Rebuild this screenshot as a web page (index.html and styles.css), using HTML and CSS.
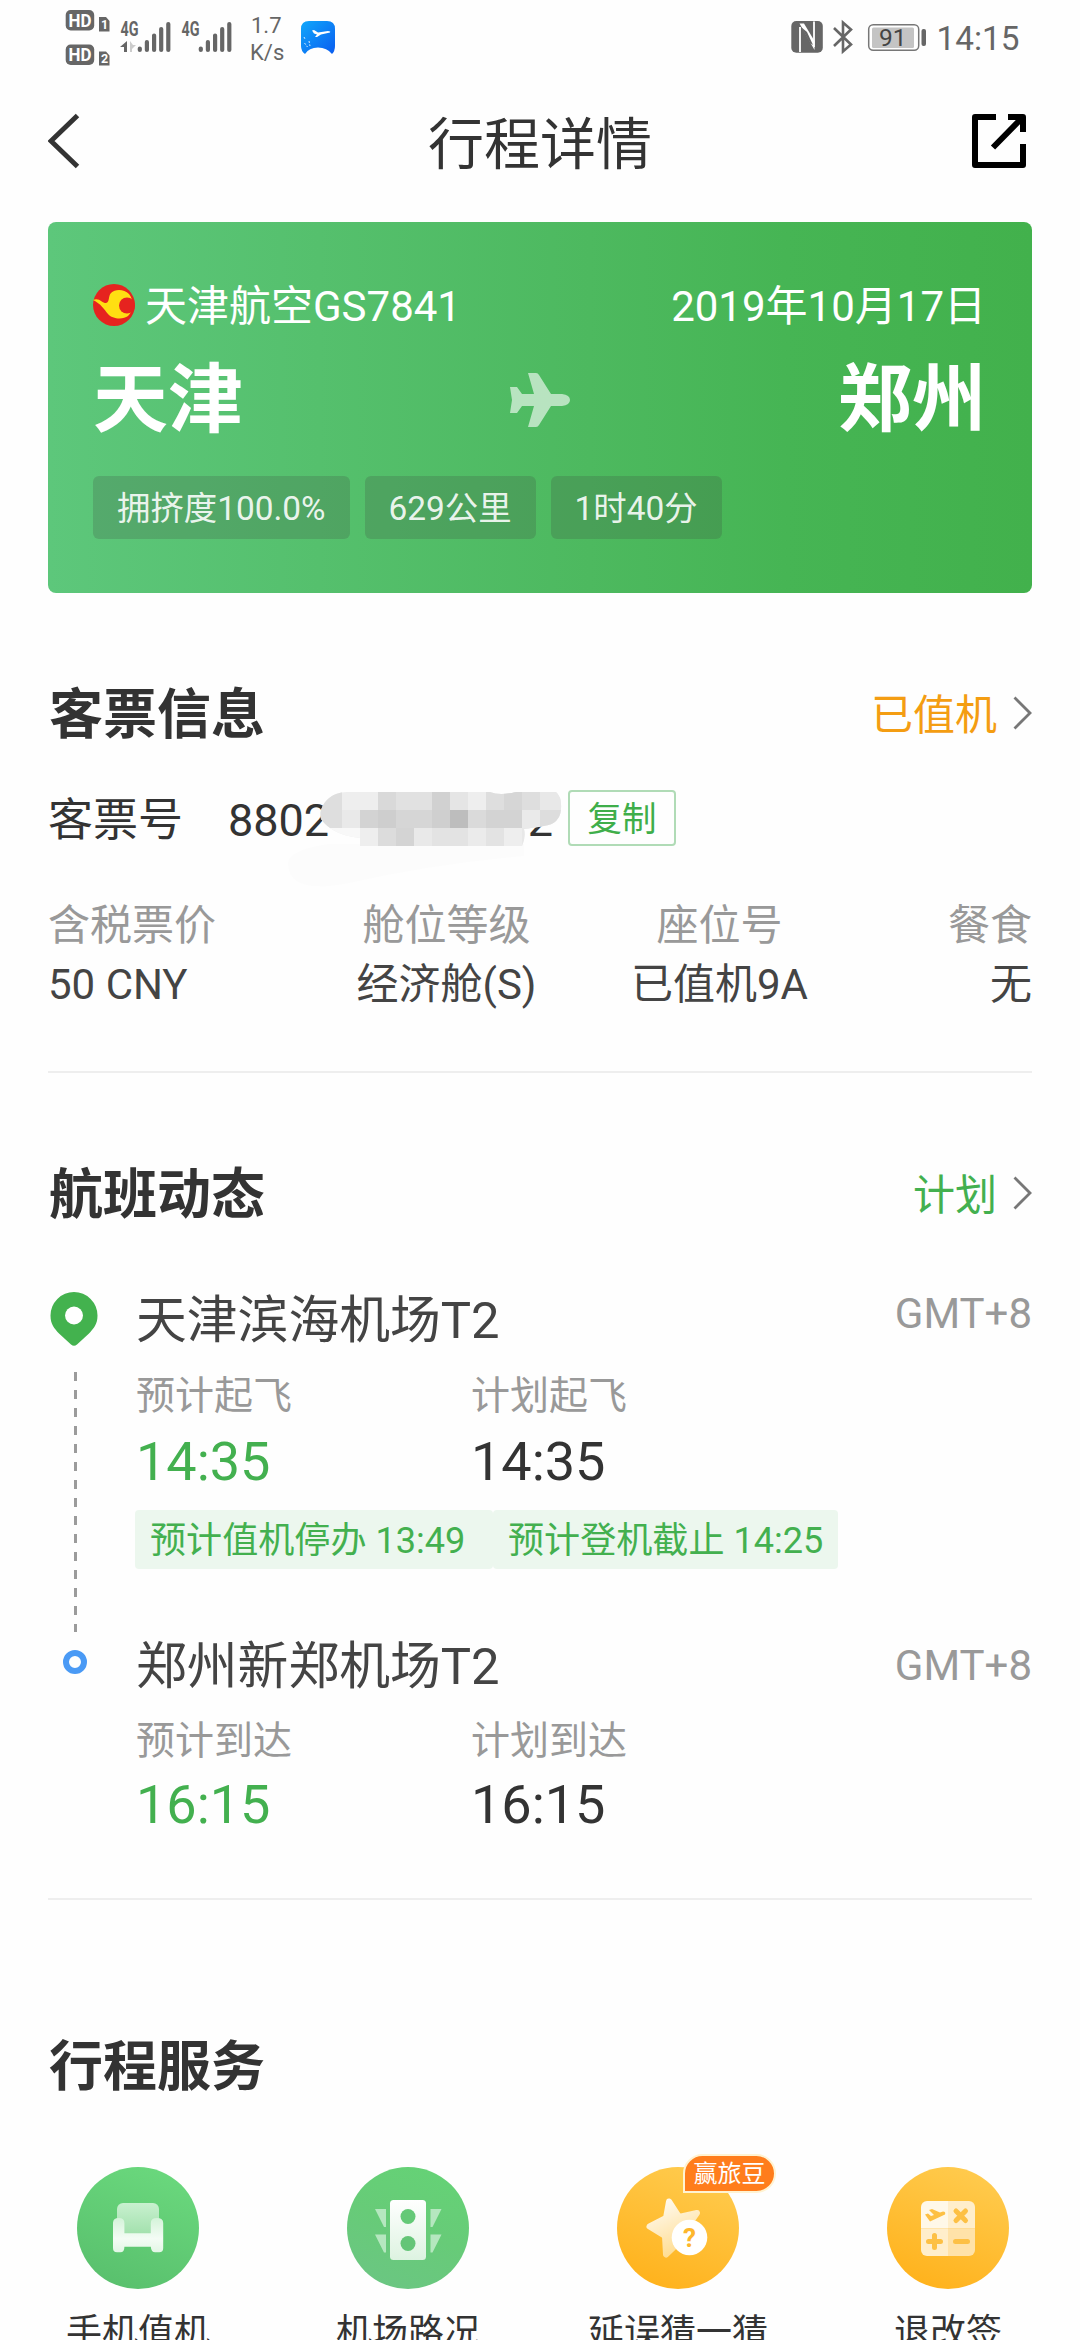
FILE: index.html
```html
<!DOCTYPE html>
<html lang="zh-CN">
<head>
<meta charset="utf-8">
<title>行程详情</title>
<link rel="stylesheet" href="styles.css">
</head>
<body>
<div class="statusbar">
  <svg class="status-left" width="300" height="80" viewBox="60 0 300 80">
    <g fill="#666">
      <rect x="65.700" y="10" width="28.500" height="20.500" rx="5"/>
      <rect x="65.700" y="44.500" width="28.500" height="20.500" rx="5"/>
      <path d="M99 17h7l3.500 4v10.500h-10.500zM99 51.500h7l3.500 4v10h-10.500z"/>
    </g>
    <g fill="#fff" class="bold" font-size="18">
      <text x="68.500" y="26.800" textLength="23" lengthAdjust="spacingAndGlyphs">HD</text>
      <text x="68.500" y="61.300" textLength="23" lengthAdjust="spacingAndGlyphs">HD</text>
      <text x="101" y="29" font-size="12.500">1</text>
      <text x="101" y="63.300" font-size="12.500">2</text>
    </g>
    <g fill="#666" class="bold" font-size="20">
      <text x="120.500" y="35.500" textLength="18" lengthAdjust="spacingAndGlyphs">4G</text>
      <text x="181.500" y="35.500" textLength="18" lengthAdjust="spacingAndGlyphs">4G</text>
    </g>
    <path d="M127 41v11h-3v-5h-4z" fill="#666"/>
    <path d="M130 41v11h2v-3l4-4h-3z" fill="#ccc"/>
    <g stroke="#666" stroke-width="4.200" stroke-linecap="round">
      <path d="M139.800 48.500v1.500M146.900 42v8M154.100 35.500v14.500M161.200 29v21M168.300 24v26"/>
      <path d="M200.800 48.500v1.500M207.900 42v8M215.100 35.500v14.500M222.200 29v21M229.300 24v26"/>
    </g>
    <g fill="#666" font-size="22">
      <text x="251" y="33">1.7</text>
      <text x="250" y="60">K/s</text>
    </g>
    <defs><linearGradient id="app" x1="0" y1="0" x2="1" y2="1"><stop offset="0" stop-color="#10a8fb"/><stop offset="1" stop-color="#0a5cf0"/></linearGradient></defs>
    <path d="M301 29q0-8 8-8h18q8 0 8 8v17q0 5-3 8-5-6.500-14-6.500t-13 6.500q-4-3-4-8z" fill="url(#app)"/>
    <path d="M312 30.500l2-.5 4 2.500 10-1.500q3 0 2 1.500l-9 2-4 2.500h-2l2-2.500-3-1z" fill="#fff"/>
    <path d="M304 37l1.500 3M309 41l1 5M304.500 43l3 4" stroke="#d8ecff" stroke-width="1" stroke-dasharray="2 1.500"/>
  </svg>
  <svg class="status-right" width="240" height="80" viewBox="785 0 240 80">
    <rect x="791.300" y="21" width="31.500" height="31.700" rx="5" fill="#666"/>
    <path d="M800 52V27M814 47V21.500" fill="none" stroke="#fff" stroke-width="1.800"/>
    <path d="M799.500 23.500L814.500 50V41L804 23.500z" fill="#fff"/>
    <path d="M801 27l6 5 6 13-3-2z" fill="#666"/>
    <path d="M834 28l17 16.500-8 7V22.500l8 7L834 46" fill="none" stroke="#666" stroke-width="2.600"/>
    <rect x="868.700" y="24.700" width="50" height="25.600" rx="4.500" fill="#fff" stroke="#777" stroke-width="1.500"/>
    <rect x="872" y="27.500" width="42" height="20.500" rx="1.500" fill="#c4c4c4"/>
    <rect x="921.500" y="29" width="4.500" height="17" rx="2" fill="#666"/>
    <text x="879" y="46" font-size="24.500" fill="#444">91</text>
    <text x="936.500" y="50" font-size="33.300" fill="#666">14:15</text>
  </svg>
</div>

<header class="navbar">
  <svg width="54" height="60" viewBox="0 0 54 60"><path d="M29.500 4.500L3 30l26.500 25.500" fill="none" stroke="#333" stroke-width="5"/></svg>
  <h1 class="nav-title">行程详情</h1>
  <svg width="54" height="54" viewBox="0 0 54 54">
    <path d="M24 3H3v48h48V30M36 3h15v15M49 5L21 33.500" fill="none" stroke="#000" stroke-width="6" stroke-linejoin="round"/>
  </svg>
</header>

<section class="flight-card">
  <div class="flight-meta">
    <div class="airline">
      <svg width="42" height="42" viewBox="0 0 42 42">
        <circle cx="21" cy="21" r="21" fill="#e6231f"/>
        <path d="M0 16c6-3 9 3 13 3 4-1 2-7 5-10 4-4 13-4 18 1 5 6 5 17-1 22-5 4-16 3-20-2C11 25 8 20 0 16z" fill="#ffdf12"/>
        <circle cx="34" cy="21.500" r="8" fill="#e6231f"/>
      </svg>
      <span>天津航空GS7841</span>
    </div>
    <span>2019年10月17日</span>
  </div>
  <div class="route">
    <span class="city">天津</span>
    <svg width="60" height="54" viewBox="0 0 60 54"><path d="M18 0h8q2 0 3 2l12 19h11q8 1 8 6t-8 6H41L29 52q-1 2-3 2h-8l6-21H12l-5 7H0l2-13L0 14h7l5 7h12z" fill="#fff" opacity=".6"/></svg>
    <span class="city city-to">郑州</span>
  </div>
  <div class="tags">
    <span class="tag">拥挤度100.0%</span>
    <span class="tag">629公里</span>
    <span class="tag">1时40分</span>
  </div>
</section>

<section class="ticket">
  <div class="section-head">
    <h2>客票信息</h2>
    <div class="status status-checked">已值机<svg width="19" height="34" viewBox="0 0 19 34"><path d="M1.500 1.500L17 17 1.500 32.500" fill="none" stroke="#777" stroke-width="2.800"/></svg></div>
  </div>
  <div class="ticket-no">
    <span class="ticket-label">客票号</span>
    <span class="number"><span>8802</span><span>2</span>
      <svg class="mosaic" width="290" height="120" viewBox="285 770 290 120">
        <defs><clipPath id="blob"><path d="M321 819c-3-12 8-27 26-27h143q10 4 26 0h40q6 5 5 17-1 15-17 17-12 2-20 3 2 8-2 17H360v-8q-28-3-39-19z"/></clipPath></defs>
        <path d="M288 864q0-14 40-20h196v12q-90 8-175 27-60 12-61-19z" fill="#fcfcfc"/>
        <g clip-path="url(#blob)">
          <rect x="318" y="790" width="246" height="58" fill="#eee"/>
          <g fill="#dedede"><rect x="318" y="792" width="24" height="36"/><rect x="378" y="792" width="18" height="18" fill="#d9d9d9"/><rect x="396" y="792" width="36" height="18" fill="#e1e1e1"/><rect x="432" y="792" width="18" height="18" fill="#d1d1d1"/><rect x="450" y="792" width="18" height="18" fill="#e5e5e5"/><rect x="486" y="792" width="36" height="18"/><rect x="504" y="792" width="18" height="18" fill="#d6d6d6"/><rect x="522" y="792" width="18" height="18"/><rect x="540" y="792" width="24" height="18" fill="#e8e8e8"/></g>
          <g fill="#d3d3d3"><rect x="342" y="810" width="18" height="18" fill="#e9e9e9"/><rect x="360" y="810" width="18" height="18"/><rect x="378" y="810" width="18" height="18" fill="#cecece"/><rect x="396" y="810" width="36" height="18" fill="#d6d6d6"/><rect x="432" y="810" width="18" height="18" fill="#cfcfcf"/><rect x="450" y="810" width="18" height="18" fill="#bdbdbd"/><rect x="468" y="810" width="18" height="18" fill="#dadada"/><rect x="486" y="810" width="36" height="18"/><rect x="522" y="810" width="18" height="18" fill="#eaeaea"/><rect x="540" y="810" width="24" height="18" fill="#ddd"/></g>
          <g fill="#e3e3e3"><rect x="318" y="828" width="42" height="18" fill="#f8f8f8"/><rect x="378" y="828" width="18" height="18" fill="#dcdcdc"/><rect x="396" y="828" width="18" height="18" fill="#d4d4d4"/><rect x="414" y="828" width="18" height="18" fill="#e9e9e9"/><rect x="432" y="828" width="36" height="18"/><rect x="468" y="828" width="18" height="18" fill="#ebebeb"/><rect x="486" y="828" width="18" height="18"/><rect x="522" y="828" width="18" height="18" fill="#e8e8e8"/></g>
        </g>
      </svg>
    </span>
    <span class="copy">复制</span>
  </div>
  <div class="facts">
    <div><span>含税票价</span><b>50 CNY</b></div>
    <div><span>舱位等级</span><b>经济舱(S)</b></div>
    <div><span>座位号</span><b>已值机9A</b></div>
    <div><span>餐食</span><b>无</b></div>
  </div>
</section>

<section class="dynamics">
  <div class="section-head">
    <h2>航班动态</h2>
    <div class="status status-plan">计划<svg width="19" height="34" viewBox="0 0 19 34"><path d="M1.500 1.500L17 17 1.500 32.500" fill="none" stroke="#777" stroke-width="2.800"/></svg></div>
  </div>
  <div class="timeline">
    <div class="rail">
      <svg width="48" height="54" viewBox="0 0 48 54"><path d="M24 0a23.500 23.500 0 0 1 23.500 23.500c0 9-4 13-8.500 18L27 52.500q-3 2.500-6 0L9 41.500C4.500 36.500.5 32.500.5 23.500A23.500 23.500 0 0 1 24 0z" fill="#43b24e"/><circle cx="24" cy="23.500" r="9" fill="#fff"/></svg>
      <div class="dashes"></div>
      <div class="ring"></div>
    </div>
    <div class="stops">
      <div class="stop">
        <div class="airport"><span>天津滨海机场T2</span><span class="zone">GMT+8</span></div>
        <div class="labels"><span>预计起飞</span><span>计划起飞</span></div>
        <div class="times"><span class="expected">14:35</span><span>14:35</span></div>
        <div class="deadlines"><span class="checkin">预计值机停办 13:49</span><span>预计登机截止 14:25</span></div>
      </div>
      <div class="stop arrival">
        <div class="airport"><span>郑州新郑机场T2</span><span class="zone">GMT+8</span></div>
        <div class="labels"><span>预计到达</span><span>计划到达</span></div>
        <div class="times"><span class="expected">16:15</span><span>16:15</span></div>
      </div>
    </div>
  </div>
</section>

<section class="services">
  <div class="section-head"><h2>行程服务</h2></div>
  <div class="service-grid">
    <div class="service">
      <svg width="122" height="122" viewBox="0 0 122 122">
        <defs>
          <linearGradient id="green" x1=".7" y1="0" x2=".3" y2="1"><stop offset="0" stop-color="#6ad87d"/><stop offset="1" stop-color="#59c06d"/></linearGradient>
          <linearGradient id="back" x1="0" y1="0" x2="0" y2="1"><stop offset="0" stop-color="#c8f0cf"/><stop offset="1" stop-color="#9fdfaa"/></linearGradient>
          <linearGradient id="seat" x1="0" y1="0" x2="0" y2="1"><stop offset="0" stop-color="#d4f3d9"/><stop offset=".6" stop-color="#f4fcf5"/><stop offset="1" stop-color="#e2f6e5"/></linearGradient>
        </defs>
        <circle cx="61" cy="61" r="61" fill="url(#green)"/>
        <rect x="40" y="36" width="42" height="34" rx="6" fill="url(#back)"/>
        <path d="M36 56q0-5 5.700-5t5.700 5v10.300h26.400V56q0-5 6.200-5t6.200 5v25q0 4.300-4 4.300h-4q-4 0-4.400-5.600H47.400q0 5.600-4 5.600H40q-4 0-4-4.300z" fill="url(#seat)"/>
      </svg>
      <span>手机值机</span>
    </div>
    <div class="service">
      <svg width="122" height="122" viewBox="0 0 122 122">
        <defs>
          <linearGradient id="green2" x1=".7" y1="0" x2=".3" y2="1"><stop offset="0" stop-color="#65d276"/><stop offset=".5" stop-color="#67cb78"/><stop offset="1" stop-color="#6bc682"/></linearGradient>
          <linearGradient id="lamp" x1="0" y1="0" x2="0" y2="1"><stop offset="0" stop-color="#fff"/><stop offset="1" stop-color="#ddf3e1"/></linearGradient>
        </defs>
        <circle cx="61" cy="61" r="61" fill="url(#green2)"/>
        <path d="M28 42h11v18h-2zM28 67.500h11v18h-2zM94.500 42h-11v18h2zM94.500 67.500h-11v18h2z" fill="#b5e7bf"/>
        <rect x="43" y="33" width="36" height="60" rx="3.500" fill="url(#lamp)"/>
        <circle cx="61" cy="49.500" r="7.500" fill="#64c977"/><circle cx="61" cy="76.500" r="7.500" fill="#64c577"/>
      </svg>
      <span>机场路况</span>
    </div>
    <div class="service">
      <svg width="122" height="122" viewBox="0 0 122 122">
        <defs>
          <linearGradient id="amber" x1=".7" y1="0" x2=".3" y2="1"><stop offset="0" stop-color="#ffcb4e"/><stop offset="1" stop-color="#ffb21c"/></linearGradient>
          <linearGradient id="star" x1=".2" y1="0" x2=".6" y2="1"><stop offset="0" stop-color="#fffaf0"/><stop offset="1" stop-color="#ffdc8f"/></linearGradient>
        </defs>
        <circle cx="61" cy="61" r="61" fill="url(#amber)"/>
        <path d="M52 34l10 15.500 18-4-12 17 9 17-17.500-2.500L49 87l-1-18.500L32.500 59l16.500-8.500z" transform="translate(0 .5)" fill="url(#star)" stroke="url(#star)" stroke-width="6" stroke-linejoin="round"/>
        <circle cx="72.500" cy="70.500" r="17.800" fill="#fff"/>
        <text x="72.500" y="80" text-anchor="middle" font-size="26" class="bold" fill="#fdb62c">?</text>
      </svg>
      <em class="badge">赢旅豆</em>
      <span>延误猜一猜</span>
    </div>
    <div class="service">
      <svg width="122" height="122" viewBox="0 0 122 122">
        <defs><clipPath id="pad"><rect x="34" y="34" width="54" height="55" rx="6"/></clipPath></defs>
        <circle cx="61" cy="61" r="61" fill="url(#amber)"/>
        <g clip-path="url(#pad)">
          <rect x="34" y="34" width="27" height="27.500" fill="#fff8e8"/>
          <rect x="61" y="34" width="27" height="27.500" fill="#ffeecb"/>
          <rect x="34" y="61.500" width="27" height="28" fill="#ffeecb"/>
          <rect x="61" y="61.500" width="27" height="28" fill="#ffe2a8"/>
        </g>
        <path d="M38 47.500l3-1 3 2.500 3-1-5-5 3-1 8 3.500 3-1q3 0 2 3L43 54.500z" fill="#fdc044"/>
        <path d="M69 44l9.500 9.500M78.500 44L69 53.500M41.500 74.500h12M47.500 68.500v12M68.500 74.500h12" stroke="#fdc044" stroke-width="5" stroke-linecap="round"/>
      </svg>
      <span>退改签</span>
    </div>
  </div>
</section>
</body>
</html>
```
FILE: styles.css
```css
* { box-sizing: border-box; margin: 0; padding: 0; }

body {
  width: 1080px;
  height: 2340px;
  overflow: hidden;
  background: #fefefe;
  color: #333;
  font-family: Roboto, "Noto Sans CJK SC", sans-serif;
}

svg { display: block; flex: none; }
.bold { font-weight: 700; }

.statusbar { display: flex; justify-content: space-between; height: 80px; padding: 0 55px 0 60px; }

.navbar {
  display: flex;
  align-items: center;
  justify-content: space-between;
  height: 122px;
  margin-bottom: 20px;
  padding: 0 54px 0 48px;
}
.nav-title { font-size: 56px; font-weight: 400; line-height: 60px; padding: 7px 0 0 6px; }

.flight-card {
  height: 371px;
  margin: 0 48px;
  padding: 62px 46px 0 45px;
  border-radius: 8px;
  background: linear-gradient(90deg, #5dc77b, #4db95f 55%, #46b554 75%, #42b14c);
  color: #fff;
}
.flight-meta { display: flex; justify-content: space-between; height: 44px; font-size: 42px; line-height: 46px; }
.airline { display: flex; gap: 10px; }
.route { display: flex; align-items: center; height: 90px; margin-top: 27px; }
.route svg { margin: 0 auto; }
.city { width: 150px; font-size: 74px; font-weight: 700; line-height: 90px; white-space: nowrap; }
.city:first-child { font-size: 75px; }
.city-to { text-align: right; }
.tags { display: flex; gap: 15px; margin-top: 31px; }
.tag {
  padding: 0 24px;
  border-radius: 6px;
  background: rgba(60, 60, 60, .2);
  color: rgba(255, 255, 255, .9);
  font-size: 33.400px;
  line-height: 65px;
  height: 63px;
}

.section-head { display: flex; justify-content: space-between; align-items: center; height: 60px; }
.section-head h2 { padding-left: 1px; font-size: 54px; line-height: 60px; font-weight: 700; }
.status { display: flex; align-items: center; gap: 16px; font-size: 42px; line-height: 60px; }
.status svg { margin-top: -6px; }
.status-checked { color: #f49d12; }
.status-plan { color: #43b04f; }

.ticket, .dynamics { margin: 0 48px; border-bottom: 2px solid #eee; }
.ticket { padding: 93px 0 57px; }
.ticket-no { display: flex; height: 60px; margin-top: 44px; font-size: 45px; line-height: 62px; }
.ticket-label { width: 180px; }
.number { position: relative; display: flex; justify-content: space-between; width: 325px; margin-right: 15px; }
.mosaic { position: absolute; left: 57px; top: -20px; }
.copy {
  width: 108px;
  height: 56px;
  border: 2px solid #b0dbb6;
  border-radius: 4px;
  color: #3fae4a;
  font-size: 34.500px;
  line-height: 55px;
  text-align: center;
}
.facts {
  display: grid;
  grid-template-columns: 262px 273px 273px 1fr;
  margin-top: 46px;
  font-size: 42px;
  text-align: center;
}
.facts div { display: flex; flex-direction: column; }
.facts div:first-child { text-align: left; }
.facts div:last-child { text-align: right; }
.facts span { color: #999; line-height: 60px; }
.facts b { color: #444; font-weight: 400; line-height: 58px; }

.dynamics { padding: 93px 0 63px; }
.timeline { display: flex; margin-top: 64px; }
.rail { width: 88px; padding: 2px 0 0 2px; }
.dashes {
  width: 3px;
  height: 260px;
  margin: 26px 0 18px 24px;
  background: repeating-linear-gradient(#9b9b9b 0 9px, transparent 9px 18px);
}
.ring { width: 24px; height: 24px; margin-left: 13px; border: 6px solid #4a9af5; border-radius: 50%; }
.stops { flex: 1; }
.airport { display: flex; justify-content: space-between; height: 60px; color: #444; font-size: 50.800px; line-height: 61px; }
.zone { color: #999; font-size: 42px; line-height: 48px; }
.labels, .times { display: grid; grid-template-columns: 335px 1fr; }
.labels { margin-top: 21px; color: #999; font-size: 39px; line-height: 50px; }
.times { margin-top: 11px; font-size: 54px; line-height: 60px; }
.expected { color: #43b04f; }
.deadlines { display: flex; margin: 18px 0 0 -1px; color: #43b04f; font-size: 36.100px; line-height: 62px; }
.deadlines span { height: 59px; padding: 0 15px; border-radius: 4px; background: #ecf7ee; }
.deadlines .checkin { width: 358px; }
.arrival { margin-top: 67px; }
.arrival .zone { line-height: 60px; }
.arrival .labels { margin-top: 20px; }
.arrival .times { margin-top: 9px; }

.services { padding-top: 138px; }
.services .section-head { padding-left: 48px; }
.service-grid { display: grid; grid-template-columns: repeat(4, 270px); margin: 69px 0 0 3px; }
.service {
  position: relative;
  display: flex;
  flex-direction: column;
  align-items: center;
  gap: 22px;
  font-size: 36px;
  line-height: 44px;
}
.badge {
  position: absolute;
  left: 140px;
  top: -13px;
  width: 93px;
  height: 39px;
  border: 2px solid #fff3d2;
  border-radius: 20px 20px 20px 0;
  background: #ff7d1c;
  color: #fff;
  font-size: 24px;
  font-style: normal;
  line-height: 37px;
  text-align: center;
}
```
